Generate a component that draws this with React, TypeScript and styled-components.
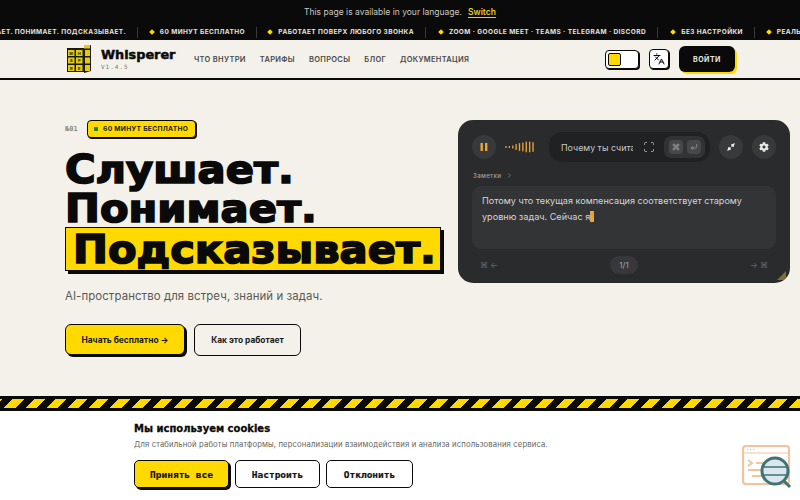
import React from "react";
import styled, { createGlobalStyle } from "styled-components";
import { Languages, Scan, CornerDownLeft, Command, ChevronRight } from "lucide-react";
import { FaCog } from "react-icons/fa";

const Global = createGlobalStyle`
  html, body { margin: 0; padding: 0; width: 800px; height: 500px; overflow: hidden; background: #fff; }
  * { box-sizing: border-box; }
  body { font-family: Inter, "Noto Sans", sans-serif; }
`;

const Page = styled.div`
  position: relative;
  width: 800px;
  height: 500px;
  display: flex;
  flex-direction: column;
  overflow: hidden;
`;

const Banner = styled.div`
  height: 40px;
  flex: none;
  background: #0a0a0a;
  display: flex;
  flex-direction: column;
  overflow: hidden;
`;
const LangBar = styled.div`
  height: 24px;
  flex: none;
  display: flex;
  justify-content: center;
  align-items: center;
  gap: 6px;
  font-size: 8.5px;
  color: #c9c9c4;
  font-family: Inter, sans-serif;
`;
const Switch = styled.span`
  color: #e6cf2e;
  font-weight: 600;
  text-decoration: underline;
  text-underline-offset: 2px;
`;
const Ticker = styled.div`
  height: 16px;
  flex: none;
  display: flex;
  align-items: center;
  margin-left: -88px;
  white-space: nowrap;
`;
const TickItem = styled.div<{ $w: number }>`
  width: ${(p) => p.$w}px;
  flex: none;
  height: 11px;
  display: flex;
  align-items: center;
  justify-content: flex-end;
  gap: 6px;
  padding-right: 11px;
  border-right: 1px solid #3a3a3a;
  font-size: 6.5px;
  font-weight: 700;
  letter-spacing: 0.42px;
  color: #e4e4df;
  font-family: Inter, sans-serif;
`;
const Diamond = styled.i`
  width: 4px;
  height: 4px;
  background: #ffd900;
  transform: rotate(45deg);
  flex: none;
`;

const Header = styled.header`
  height: 40px;
  flex: none;
  background: #f4f1ea;
  border-bottom: 2px solid #0a0a0a;
  display: flex;
  align-items: center;
  padding: 0 65px 0 67px;
`;
const Brand = styled.div`
  display: flex;
  align-items: center;
  gap: 10px;
  width: 127px;
  flex: none;
`;
const BrandText = styled.div`
  display: flex;
  flex-direction: column;
  gap: 1px;
`;
const BrandName = styled.div`
  font-family: "DejaVu Sans", sans-serif;
  font-weight: 700;
  font-size: 12.8px;
  line-height: 14px;
  color: #0a0a0a;
  -webkit-text-stroke: 0.5px #0a0a0a;
`;
const Version = styled.div`
  font-family: "DejaVu Sans Mono", monospace;
  font-size: 6px;
  line-height: 8px;
  letter-spacing: 1px;
  color: #77776f;
`;
const Nav = styled.nav`
  display: flex;
  gap: 14px;
  flex: 1;
`;
const NavLink = styled.span`
  font-size: 7.5px;
  font-weight: 600;
  letter-spacing: 0.3px;
  color: #4a4a46;
`;
const Toggle = styled.div`
  width: 34px;
  height: 19px;
  background: #fff;
  border: 1.5px solid #0a0a0a;
  border-radius: 4px;
  box-shadow: 1px 1px 0 #0a0a0a;
  padding: 2px;
  flex: none;
`;
const ToggleKnob = styled.div`
  width: 13px;
  height: 13px;
  background: #ffd900;
  border: 1px solid #0a0a0a;
  border-radius: 2px;
`;
const LangBtn = styled.div`
  width: 20px;
  height: 20px;
  margin-left: 10px;
  background: #fff;
  border: 1.5px solid #0a0a0a;
  border-radius: 4px;
  box-shadow: 1px 1px 0 #0a0a0a;
  display: flex;
  align-items: center;
  justify-content: center;
  color: #0a0a0a;
  flex: none;
`;
const LoginBtn = styled.div`
  width: 56px;
  height: 26px;
  margin-left: 10px;
  background: #0a0a0a;
  color: #e9e9e4;
  border-radius: 6px;
  box-shadow: 2px 2px 0 #ffd900;
  display: flex;
  align-items: center;
  justify-content: center;
  font-size: 7px;
  font-weight: 700;
  letter-spacing: 0.5px;
  flex: none;
`;

const Hero = styled.main`
  height: 316px;
  flex: none;
  background: #f4f1ea;
  display: flex;
  padding: 40px 10px 0 65px;
`;
const HeroLeft = styled.div`
  width: 393px;
  flex: none;
  display: flex;
  flex-direction: column;
`;
const Eyebrow = styled.div`
  display: flex;
  align-items: center;
  gap: 9px;
  height: 18px;
`;
const Num = styled.span`
  font-family: "DejaVu Sans Mono", monospace;
  font-weight: 700;
  font-size: 7px;
  color: #8a8a82;
  width: 13px;
`;
const Badge = styled.div`
  height: 18px;
  width: 109px;
  background: #ffd900;
  border: 1.5px solid #0a0a0a;
  border-radius: 4px;
  box-shadow: 1px 1px 0 #0a0a0a;
  display: flex;
  align-items: center;
  gap: 5px;
  padding-left: 6px;
  font-size: 6.7px;
  font-weight: 700;
  letter-spacing: 0.3px;
  color: #222;
`;
const Dot = styled.i`
  width: 4px;
  height: 4px;
  background: #1f8a2b;
  flex: none;
`;
const Title = styled.h1`
  margin: 12px 0 0;
  font-family: "DejaVu Sans", sans-serif;
  font-weight: 700;
  font-size: 39.5px;
  line-height: 38.5px;
  color: #0a0a0a;
  -webkit-text-stroke: 1.7px #0a0a0a;
`;
const TitleLine = styled.span`
  display: block;
  transform: scaleX(1.055);
  transform-origin: left center;
  white-space: nowrap;
`;
const Mark = styled.div`
  width: 376px;
  height: 44px;
  background: #ffd900;
  border: 1.5px solid #0a0a0a;
  box-shadow: 3px 3px 0 #0a0a0a;
  display: flex;
  align-items: center;
  padding-left: 7px;
`;
const Sub = styled.p`
  margin: 16px 0 0;
  font-size: 11.4px;
  line-height: 18px;
  letter-spacing: 0.1px;
  color: #5a5a55;
`;
const Actions = styled.div`
  display: flex;
  gap: 9px;
  margin-top: 19px;
`;
const PrimaryBtn = styled.div`
  width: 120px;
  height: 31px;
  background: #ffd900;
  border: 1.5px solid #0a0a0a;
  border-radius: 6px;
  box-shadow: 2px 2px 0 #0a0a0a;
  display: flex;
  align-items: center;
  justify-content: center;
  font-size: 8.4px;
  font-weight: 700;
  color: #1a1a1a;
`;
const GhostBtn = styled(PrimaryBtn)`
  width: 107px;
  height: 32px;
  background: transparent;
  box-shadow: none;
`;

const Panel = styled.section`
  width: 332px;
  height: 163px;
  background: #2a2b2d;
  border-radius: 15px;
  padding: 12px 14px 0;
  display: flex;
  flex-direction: column;
  flex: none;
  position: relative;
  overflow: hidden;
`;
const PanelTop = styled.div`
  display: flex;
  align-items: center;
  height: 30px;
`;
const Circle = styled.div<{ $ml?: number }>`
  width: 24px;
  height: 24px;
  border-radius: 50%;
  background: #38393b;
  margin-left: ${(p) => p.$ml ?? 0}px;
  display: flex;
  align-items: center;
  justify-content: center;
  flex: none;
  color: #e8e8e8;
`;
const Pill = styled.div`
  width: 161px;
  height: 30px;
  margin-left: 15px;
  border-radius: 13px;
  background: #202123;
  display: flex;
  align-items: center;
  padding-left: 12px;
  flex: none;
`;
const Question = styled.div`
  width: 72px;
  overflow: hidden;
  white-space: nowrap;
  font-size: 8.9px;
  color: #c8c8c8;
  flex: none;
`;
const ScanWrap = styled.div`
  margin-left: 10px;
  display: flex;
  color: #c8c8c8;
`;
const Keys = styled.div`
  margin-left: 9px;
  width: 41px;
  height: 22px;
  border-radius: 7px;
  background: #323335;
  display: flex;
  align-items: center;
  justify-content: center;
  gap: 4px;
  color: #aaa;
`;
const Key = styled.div`
  width: 14px;
  height: 14px;
  border-radius: 4px;
  background: #47484a;
  display: flex;
  align-items: center;
  justify-content: center;
`;
const NotesLabel = styled.div`
  margin-top: 7px;
  height: 12px;
  display: flex;
  align-items: center;
  gap: 3px;
  padding-left: 1px;
  font-size: 6.2px;
  font-weight: 500;
  letter-spacing: 0.3px;
  color: #a2a2a2;
`;
const Card = styled.div`
  margin-top: 5px;
  width: 304px;
  height: 63px;
  background: #333436;
  border-radius: 9px;
  padding: 7px 10px;
  font-size: 9.1px;
  line-height: 15.5px;
  color: #d6d6d6;
`;
const Caret = styled.span`
  display: inline-block;
  width: 4px;
  height: 11px;
  background: #e8a33a;
  vertical-align: -2px;
`;
const PanelFoot = styled.div`
  margin-top: 7px;
  height: 18px;
  display: flex;
  align-items: center;
  justify-content: space-between;
  padding: 0 8px;
  font-size: 8px;
  color: #66676a;
`;
const Pager = styled.div`
  width: 28px;
  height: 18px;
  border-radius: 9px;
  background: #37383a;
  color: #a5a5a5;
  display: flex;
  align-items: center;
  justify-content: center;
  font-size: 8px;
`;
const Grip = styled.svg`
  position: absolute;
  right: 3px;
  bottom: 2px;
`;

const Stripe = styled.div`
  height: 15px;
  flex: none;
  border-top: 3px solid #0a0a0a;
  border-bottom: 3px solid #0a0a0a;
  background: repeating-linear-gradient(-45deg, #ffd900 0 8px, #0a0a0a 8px 15px);
`;

const Cookie = styled.section`
  flex: 1;
  background: #fff;
  padding: 12px 0 0 134px;
  display: flex;
  flex-direction: column;
`;
const CookieTitle = styled.div`
  font-family: "DejaVu Sans", sans-serif;
  font-weight: 700;
  font-size: 10px;
  line-height: 12px;
  color: #0a0a0a;
  -webkit-text-stroke: 0.3px #0a0a0a;
`;
const CookieText = styled.div`
  margin-top: 4px;
  font-size: 7.7px;
  line-height: 12px;
  letter-spacing: 0.13px;
  color: #66665f;
`;
const CookieActions = styled.div`
  display: flex;
  gap: 6px;
  margin-top: 9px;
`;
const CookieBtn = styled.div<{ $w: number; $primary?: boolean }>`
  width: ${(p) => p.$w}px;
  height: 28px;
  background: ${(p) => (p.$primary ? "#ffd900" : "#fff")};
  border: 1.5px solid #0a0a0a;
  border-radius: 5px;
  box-shadow: ${(p) => (p.$primary ? "2px 2px 0 #0a0a0a" : "none")};
  display: flex;
  align-items: center;
  justify-content: center;
  font-family: "DejaVu Sans Mono", monospace;
  font-weight: 700;
  font-size: 9.5px;
  color: #111;
  -webkit-text-stroke: 0.2px #111;
`;
const Widget = styled.svg`
  position: absolute;
  left: 742px;
  top: 445px;
`;

const LOGO_LETTERS = ["W", "H", "S", "P", "R", "E"];

const Logo = () => (
  <svg width="24" height="28" viewBox="0 0 24 28">
    <rect x="0" y="3" width="17" height="24" fill="#1a1a10" />
    <path d="M17 3l7-3v26l-7 2z" fill="#1a1a10" />
    {[0, 1, 2].flatMap((r) =>
      [0, 1].map((c) => (
        <g key={`a${r}${c}`}>
          <rect x={1 + c * 8} y={5 + r * 7.5} width="6.5" height="6" fill="#e3cb12" />
          <text x={4.2 + c * 8} y={9.8 + r * 7.5} fontSize="4" fontWeight="700" textAnchor="middle" fill="#1a1a10" fontFamily="Inter, sans-serif">
            {LOGO_LETTERS[r * 2 + c]}
          </text>
        </g>
      ))
    )}
    {[0, 1, 2].map((r) => (
      <rect key={`b${r}`} x="18" y={5 + r * 7.5} width="5" height="6" fill="#e3cb12" />
    ))}
    <rect x="17" y="0" width="6" height="3.5" fill="#e3cb12" />
  </svg>
);

const Wave = () => (
  <svg width="30" height="14" viewBox="0 0 30 14" style={{ marginLeft: 9 }}>
    {[
      [1, 2],[4.5, 2],[8, 3],[11.5, 6],[15, 8],[18.5, 9],[22, 11],[25.5, 11],[29, 10],
    ].map(([x, h]) => (
      <rect key={x} x={x - 0.7} y={7 - h / 2} width="1.4" height={h} fill="#e8a33a" />
    ))}
  </svg>
);

const WidgetIcon = () => (
  <Widget width="50" height="44" viewBox="0 0 50 44">
    <rect x="1" y="1" width="46" height="38" rx="3" fill="#fff" stroke="#f3c39a" strokeWidth="2.2" />
    <path d="M1 8h46" stroke="#f3c39a" strokeWidth="1.2" />
    <path d="M5 4.5h1.5M8 4.5h1.5M11 4.5h1.5" stroke="#f3c39a" strokeWidth="1.2" />
    <path d="M6 15l4 3-4 3M14 18h18M6 25h18M10 31h16" fill="none" stroke="#f3c39a" strokeWidth="2" />
    <circle cx="33" cy="26" r="13" fill="#dbe7ec" stroke="#3f7378" strokeWidth="3" />
    <path d="M21 22h24M21 30h24" stroke="#3f7378" strokeWidth="1.4" />
    <path d="M42 36l6 6" stroke="#3f7378" strokeWidth="3" />
  </Widget>
);

const ticks: [string, number][] = [
  ["СЛУШАЕТ. ПОНИМАЕТ. ПОДСКАЗЫВАЕТ.", 226],
  ["60 МИНУТ БЕСПЛАТНО", 119],
  ["РАБОТАЕТ ПОВЕРХ ЛЮБОГО ЗВОНКА", 169],
  ["ZOOM · GOOGLE MEET · TEAMS · TELEGRAM · DISCORD", 232],
  ["БЕЗ НАСТРОЙКИ", 97],
  ["РЕАЛЬНОЕ ВРЕМЯ", 100],
];

export default function App() {
  return (
    <Page>
      <Global />
      <Banner>
        <LangBar>
          <span>This page is available in your language.</span>
          <Switch>Switch</Switch>
        </LangBar>
        <Ticker>
          {ticks.map(([t, w]) => (
            <TickItem key={t} $w={w}>
              <Diamond />
              {t}
            </TickItem>
          ))}
        </Ticker>
      </Banner>
      <Header>
        <Brand>
          <Logo />
          <BrandText>
            <BrandName>Whisperer</BrandName>
            <Version>V1.4.5</Version>
          </BrandText>
        </Brand>
        <Nav>
          {["ЧТО ВНУТРИ", "ТАРИФЫ", "ВОПРОСЫ", "БЛОГ", "ДОКУМЕНТАЦИЯ"].map((n) => (
            <NavLink key={n}>{n}</NavLink>
          ))}
        </Nav>
        <Toggle>
          <ToggleKnob />
        </Toggle>
        <LangBtn>
          <Languages size={12} strokeWidth={2} />
        </LangBtn>
        <LoginBtn>ВОЙТИ</LoginBtn>
      </Header>
      <Hero>
        <HeroLeft>
          <Eyebrow>
            <Num>№01</Num>
            <Badge>
              <Dot />
              60 МИНУТ БЕСПЛАТНО
            </Badge>
          </Eyebrow>
          <Title>
            <TitleLine>Слушает.</TitleLine>
            <TitleLine>Понимает.</TitleLine>
            <Mark>
              <TitleLine>Подсказывает.</TitleLine>
            </Mark>
          </Title>
          <Sub>AI-пространство для встреч, знаний и задач.</Sub>
          <Actions>
            <PrimaryBtn>Начать бесплатно →</PrimaryBtn>
            <GhostBtn>Как это работает</GhostBtn>
          </Actions>
        </HeroLeft>
        <Panel>
          <PanelTop>
            <Circle>
              <svg width="8" height="10" viewBox="0 0 8 10">
                <rect x="0.5" y="1" width="2.4" height="8" fill="#e8a33a" />
                <rect x="5" y="1" width="2.4" height="8" fill="#e8a33a" />
              </svg>
            </Circle>
            <Wave />
            <Pill>
              <Question>Почему ты считаешь</Question>
              <ScanWrap>
                <Scan size={12} strokeWidth={1.6} />
              </ScanWrap>
              <Keys>
                <Key>
                  <Command size={8} />
                </Key>
                <Key>
                  <CornerDownLeft size={8} />
                </Key>
              </Keys>
            </Pill>
            <Circle $ml={9}>
              <svg width="10" height="10" viewBox="0 0 10 10" fill="none" stroke="#e8e8e8" strokeWidth="1.4">
                <path d="M1.5 8.5L4 6M4 8V6H2M8.5 1.5L6 4M6 2v2h2" />
              </svg>
            </Circle>
            <Circle $ml={9}>
              <FaCog size={10} />
            </Circle>
          </PanelTop>
          <NotesLabel>
            Заметки <ChevronRight size={7} style={{ marginLeft: 2 }} />
          </NotesLabel>
          <Card>
            Потому что текущая компенсация соответствует старому уровню задач. Сейчас я<Caret />
          </Card>
          <PanelFoot>
            <span>⌘ ←</span>
            <Pager>1/1</Pager>
            <span>→ ⌘</span>
          </PanelFoot>
          <Grip width="11" height="11" viewBox="0 0 11 11">
            <path d="M1 10L10 1v9z" fill="#7c6f35" />
          </Grip>
        </Panel>
      </Hero>
      <Stripe />
      <Cookie>
        <CookieTitle>Мы используем cookies</CookieTitle>
        <CookieText>Для стабильной работы платформы, персонализации взаимодействия и анализа использования сервиса.</CookieText>
        <CookieActions>
          <CookieBtn $w={95} $primary>Принять все</CookieBtn>
          <CookieBtn $w={85}>Настроить</CookieBtn>
          <CookieBtn $w={87}>Отклонить</CookieBtn>
        </CookieActions>
      </Cookie>
      <WidgetIcon />
    </Page>
  );
}
